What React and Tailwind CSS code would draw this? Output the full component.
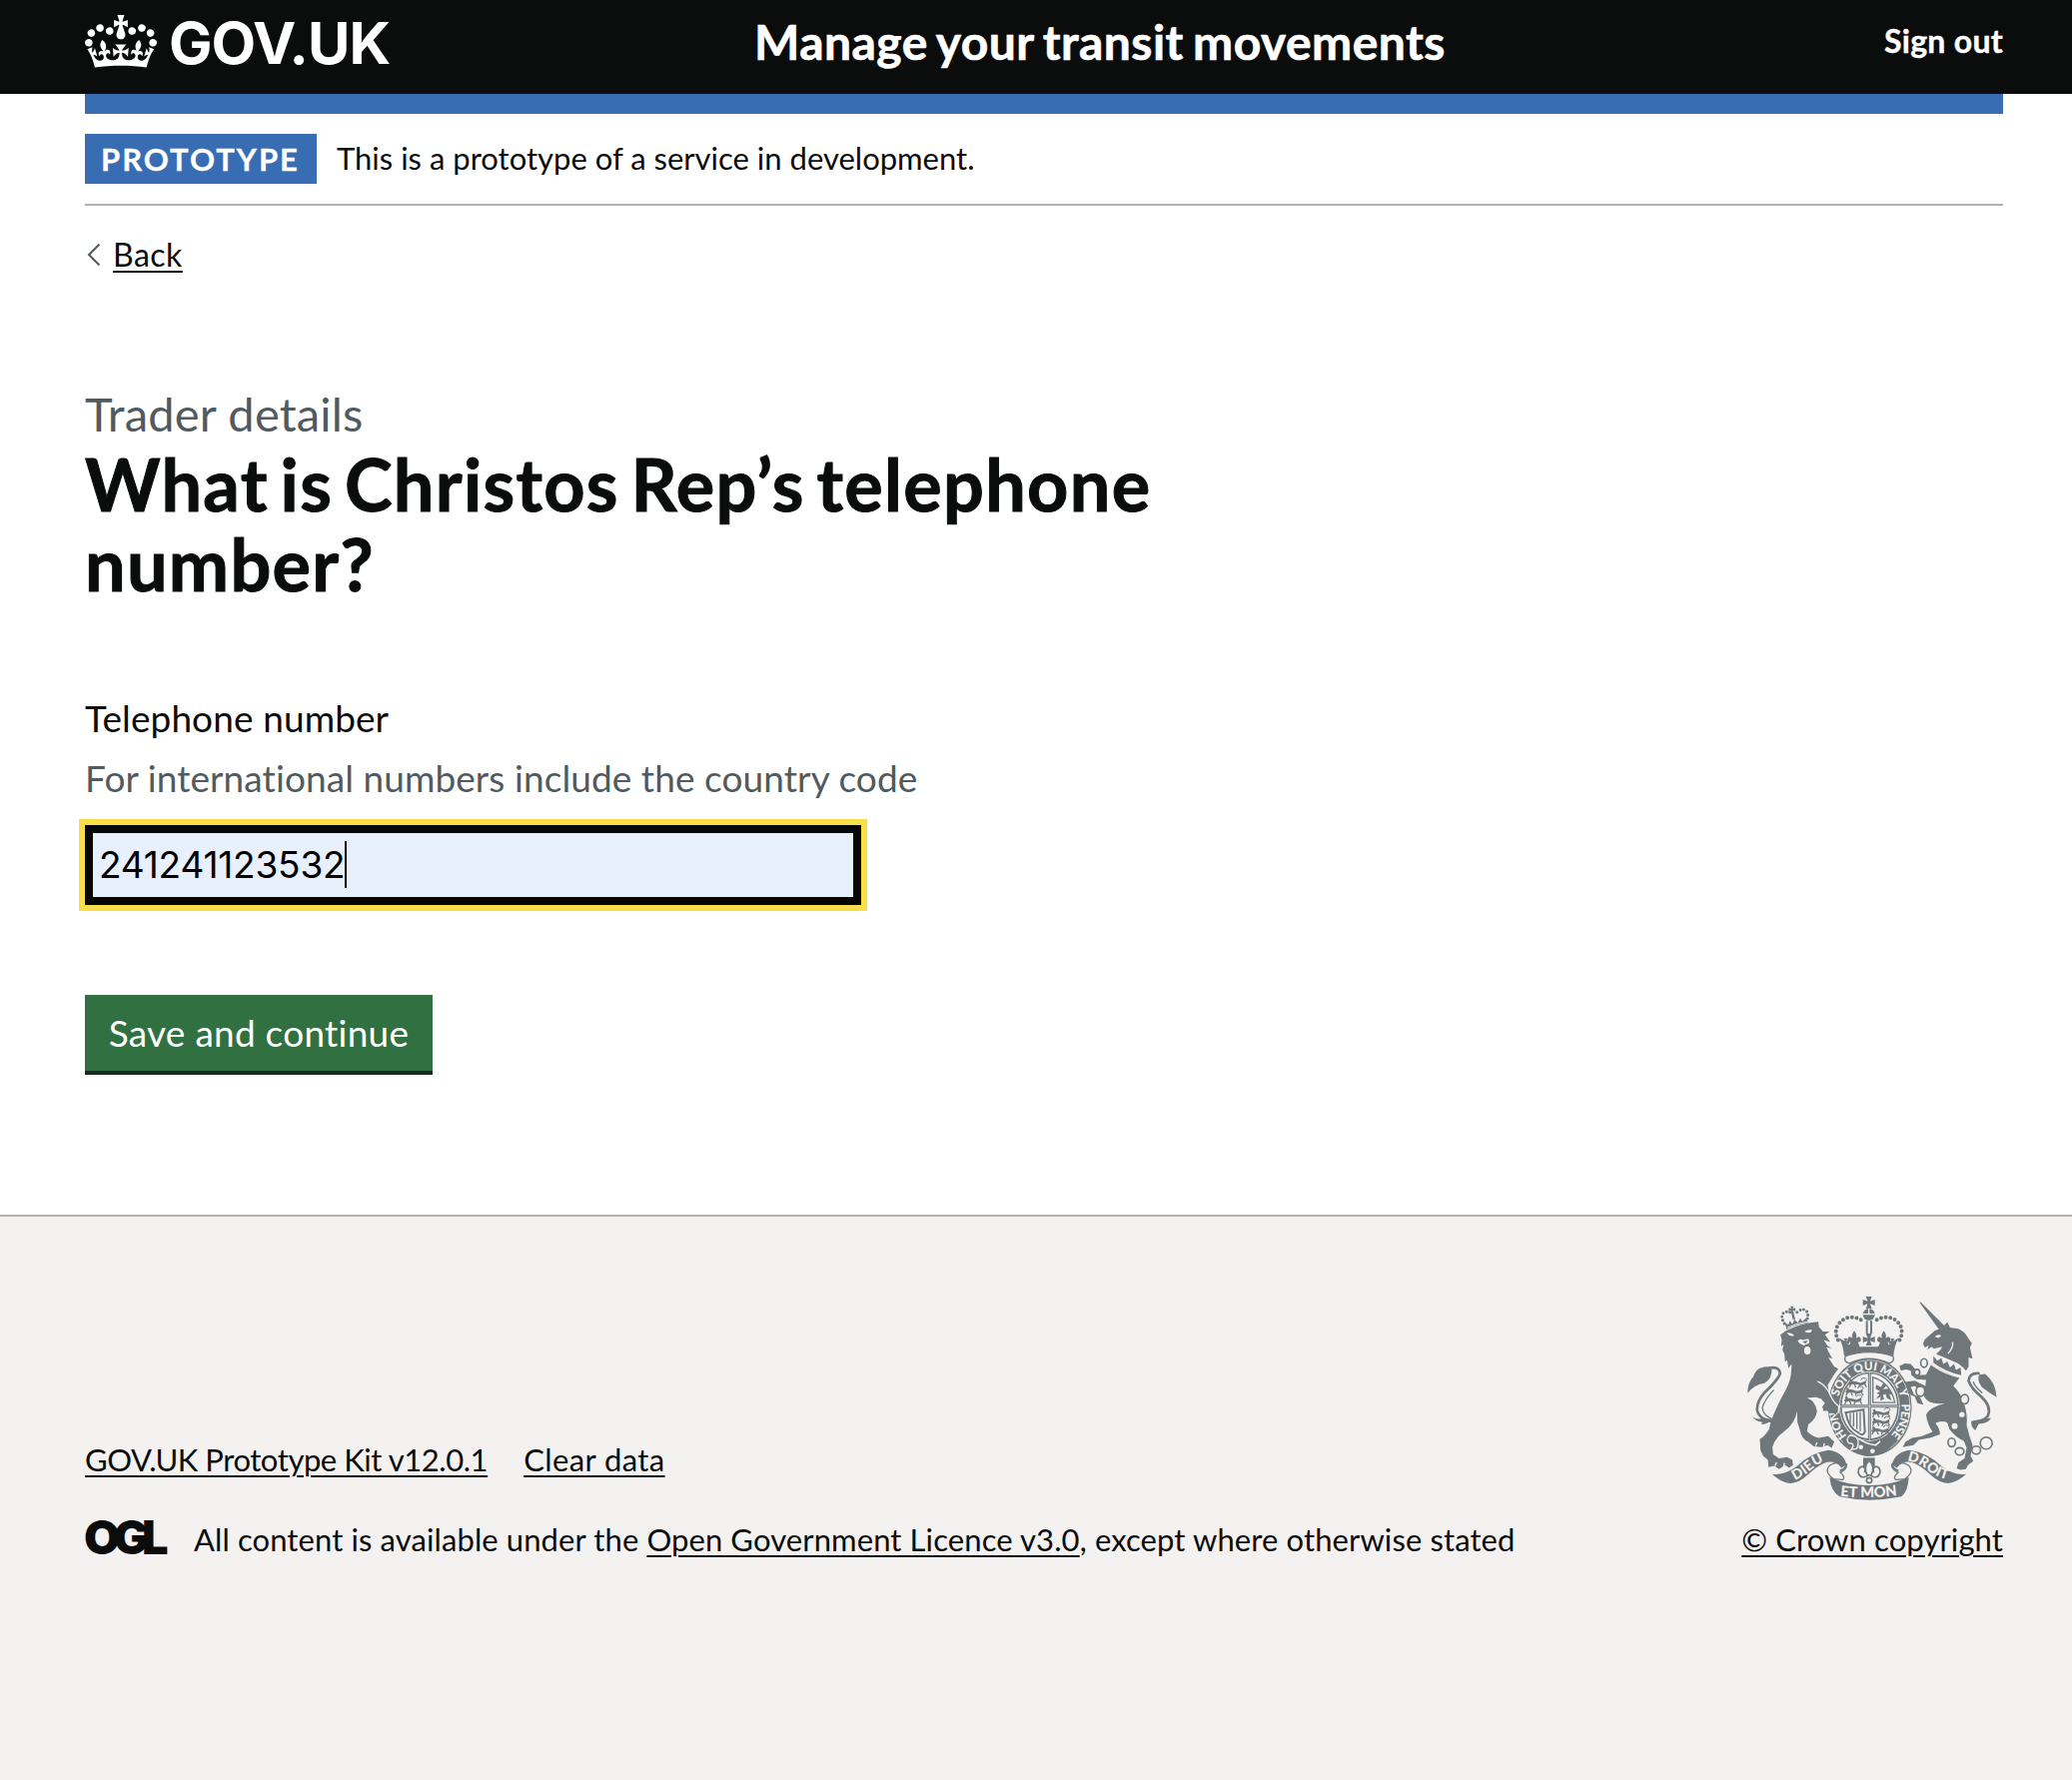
import React from "react";

function Crown() {
  return (
    <svg viewBox="0 0 132 97" className="h-[53px] w-[72px] shrink-0" fill="currentColor" aria-hidden="true">
      <path
        fillRule="evenodd"
        d="M25 30.2c3.5 1.5 7.7-.2 9.1-3.7 1.5-3.6-.2-7.8-3.9-9.2-3.6-1.4-7.6.3-9.1 3.9-1.4 3.5.3 7.5 3.9 9zM9 39.5c3.6 1.5 7.8-.2 9.2-3.7 1.5-3.6-.2-7.8-3.9-9.1-3.6-1.5-7.6.2-9.1 3.8-1.4 3.5.3 7.5 3.8 9zM4.4 57.2c3.5 1.5 7.7-.2 9.1-3.8 1.5-3.6-.2-7.7-3.9-9.1-3.5-1.5-7.6.3-9.1 3.8-1.4 3.5.3 7.6 3.9 9.1zm38.3-21.4c3.5 1.5 7.7-.2 9.1-3.8 1.5-3.6-.2-7.7-3.9-9.1-3.6-1.5-7.6.3-9.1 3.8-1.3 3.6.4 7.7 3.9 9.1zm64.4-5.6c-3.6 1.5-7.8-.2-9.1-3.7-1.5-3.6.2-7.8 3.8-9.2 3.6-1.4 7.7.3 9.2 3.9 1.3 3.5-.4 7.5-3.9 9zm15.9 9.3c-3.6 1.5-7.7-.2-9.1-3.7-1.5-3.6.2-7.8 3.7-9.1 3.6-1.5 7.7.2 9.2 3.8 1.5 3.5-.3 7.5-3.8 9zm4.7 17.7c-3.6 1.5-7.8-.2-9.2-3.8-1.5-3.6.2-7.7 3.9-9.1 3.6-1.5 7.7.3 9.2 3.8 1.3 3.5-.4 7.6-3.9 9.1zM89.3 35.8c-3.6 1.5-7.8-.2-9.2-3.8-1.4-3.6.2-7.7 3.9-9.1 3.6-1.5 7.7.3 9.2 3.8 1.4 3.6-.3 7.7-3.9 9.1zM69.7 17.7l8.9 4.7V9.3l-8.9 2.8c-.2-.3-.5-.6-.9-.9L72.4 0H59.6l3.5 11.2c-.3.3-.6.5-.9.9l-8.8-2.8v13.1l8.8-4.7c.3.3.6.7.9.9l-5 15.4v.1c-.2.8-.4 1.6-.4 2.4 0 4.1 3.1 7.5 7 8.1h.2c.3 0 .7.1 1 .1.4 0 .7 0 1-.1h.2c4-.6 7.1-4.1 7.1-8.1 0-.8-.1-1.7-.4-2.4V34l-5.1-15.4c.4-.2.7-.6 1-.9zM66 92.8c16.9 0 32.8 1.1 47.1 3.2 4-16.9 8.9-26.7 14-33.5l-9.6-3.4c1 4.9 1.1 7.2 0 10.2-1.5-1.4-3-4.3-4.2-8.7L108.6 76c2.8-2 5-3.2 7.5-3.3-4.4 9.4-10 11.9-13.6 11.2-4.3-.8-6.3-4.6-5.6-7.9 1-4.7 5.7-5.9 8-.5 4.3-8.7-3-11.4-7.6-8.8 7.1-7.2 7.9-13.5 2.1-21.1-8 6.1-8.1 12.3-4.5 20.8-4.7-5.4-12.1-2.5-9.5 6.2 3.4-5.2 7.9-2 7.2 3.1-.6 4.3-6.4 7.8-13.5 7.2-10.3-.9-10.9-8-11.2-13.8 2.5-.5 7.1 1.8 11 7.3L80.2 60c-4.1 4.4-8 5.3-12.3 5.4 1.4-4.4 8-11.6 8-11.6H55.5s6.4 7.2 7.9 11.6c-4.2-.1-8-1-12.3-5.4l1.4 16.4c3.9-5.5 8.5-7.7 10.9-7.3-.3 5.8-.9 12.8-11.1 13.8-7.2.6-12.9-2.9-13.5-7.2-.7-5 3.8-8.3 7.1-3.1 2.7-8.7-4.6-11.6-9.4-6.2 3.7-8.5 3.6-14.7-4.6-20.8-5.8 7.6-5 13.9 2.2 21.1-4.7-2.6-11.9.1-7.7 8.8 2.3-5.5 7.1-4.2 8.1.5.7 3.3-1.3 7.1-5.7 7.9-3.5.7-9-1.8-13.5-11.2 2.5.1 4.7 1.3 7.5 3.3l-4.7-15.4c-1.2 4.4-2.7 7.2-4.3 8.7-1.1-3-.9-5.3 0-10.2l-9.5 3.4c5 6.9 9.9 16.7 14 33.5 14.8-2.1 30.8-3.2 47.7-3.2z"
      />
    </svg>
  );
}

const GREY = "#6f777b";
const PAPER = "#f3f2f1";

function Cross({ x, y, r }) {
  return (
    <path
      transform={`translate(${x} ${y}) scale(${r / 10})`}
      d="M-5-10H5L2-2 10-5V5L2 2 5 10H-5L-2 2-10 5V-5L-2-2Z"
      fill={GREY}
    />
  );
}

function Fleur({ x, y, s = 1 }) {
  return (
    <path
      transform={`translate(${x} ${y}) scale(${s})`}
      d="M0-24Q9-13 5-3 14-12 18-2 20 7 10 8L16 22H-16L-10 8Q-20 7-18-2-14-12-5-3-9-13 0-24Z"
      fill={GREY}
    />
  );
}

// Small striding lion used in the shield quarters.
function ShieldLion({ x, y }) {
  return (
    <g transform={`translate(${x} ${y})`} fill="none" stroke={GREY} strokeWidth="5" strokeLinecap="round">
      <path d="M2 3Q12-3 24 2T46 0" strokeWidth="8" />
      <path d="M4 4L0 13M14 3L18 13M32 4L28 13M44 2L50 12" strokeWidth="4" />
      <path d="M46-2Q56-8 48-13T34-9" strokeWidth="3" />
      <path d="M4-6L8 2" strokeWidth="8" />
    </g>
  );
}

function Crest({ className }) {
  return (
    <svg viewBox="57 53 750 613" className={className} role="img" aria-label="Royal coat of arms">
      {/* Imperial crown */}
      <Cross x={422} y={71} r={18} />
      <ellipse cx="422" cy="107" rx="18" ry="18" fill={GREY} />
      <path d="M404 106H440M422 88V106" stroke={PAPER} strokeWidth="4" />
      <path d="M416 126V164M429 126V164" stroke={GREY} strokeWidth="6" />
      <g fill="none" stroke={GREY} strokeWidth="12" strokeLinecap="round" strokeDasharray="0 14">
        <path d="M398 123Q372 108 346 122Q322 138 323 162Q324 178 334 190" />
        <path d="M446 123Q474 108 500 122Q522 138 521 162Q520 178 510 190" />
      </g>
      <path d="M334 178L352 190L370 204H474L492 190L511 178Q498 204 496 232Q422 210 348 232Q346 204 334 178Z" fill={GREY} />
      <Cross x={422} y={182} r={18} />
      <Cross x={352} y={190} r={11} />
      <Cross x={493} y={190} r={11} />
      <Fleur x={378} y={182} s={1.1} />
      <Fleur x={467} y={182} s={1.1} />

      {/* Garter */}
      <ellipse cx="425" cy="386" rx="126" ry="147" fill={GREY} />
      <ellipse cx="425" cy="386" rx="121" ry="142" fill="none" stroke={PAPER} strokeWidth="2" />
      <path d="M352 232Q422 208 494 232Q502 246 484 254Q422 226 364 254Q344 250 352 232Z" fill={PAPER} stroke={GREY} strokeWidth="4" />
      <ellipse cx="424" cy="383" rx="91" ry="105" fill={PAPER} />
      <path id="motto-left" d="M356 472A97 112 0 0 1 327 396" fill="none" />
      <path id="motto-top" d="M331 354A97 112 0 0 1 520 372" fill="none" />
      <path id="motto-right" d="M520 376A97 112 0 0 1 482 476" fill="none" />
      <g fill={PAPER} fontFamily="Lato, sans-serif" fontWeight="900" fontSize="35">
        <text textLength="80"><textPath href="#motto-left">HON</textPath></text>
        <text textLength="266"><textPath href="#motto-top">SOIT QUI MAL Y</textPath></text>
        <text textLength="102"><textPath href="#motto-right">PENSE</textPath></text>
      </g>

      {/* Shield */}
      <ellipse cx="424" cy="383" rx="86" ry="100" fill="none" stroke={GREY} strokeWidth="5" />
      <path d="M424 282V486M336 383H512" stroke={GREY} strokeWidth="9" />
      <path d="M424 282V486M336 383H512" stroke={PAPER} strokeWidth="2" />
      <ShieldLion x={364} y={312} />
      <ShieldLion x={354} y={337} />
      <ShieldLion x={350} y={363} />
      <ShieldLion x={434} y={402} />
      <ShieldLion x={434} y={428} />
      <ShieldLion x={432} y={454} />
      <path d="M434 296Q488 312 500 372H434Z" fill="none" stroke={GREY} strokeWidth="4" />
      <path
        d="M442 362L454 348L446 344L456 338L442 330L444 318L458 326L466 312L474 322L464 332L482 330L494 350L484 346L490 366L476 358L472 346L464 350L468 362L456 366L458 354Z"
        fill={GREY}
      />
      <path d="M352 402L406 393L410 460Q404 476 390 462Q362 450 352 402Z" fill="none" stroke={GREY} strokeWidth="6" />
      <path d="M366 404V434M376 402V444M386 401V452M396 400V458" stroke={GREY} strokeWidth="4" />

      {/* Garter buckle */}
      <path d="M350 472Q368 500 400 504L440 488L484 482L494 500Q460 540 408 532Q366 520 344 492Z" fill={GREY} />
      <path d="M366 470Q350 482 362 494Q384 494 368 514L386 510Q396 488 382 474Z" fill={GREY} stroke={PAPER} strokeWidth="4" />
      <path d="M390 480Q414 496 442 500L456 488" fill="none" stroke={PAPER} strokeWidth="5" />
      <circle cx="398" cy="506" r="7" fill={PAPER} />
      <circle cx="433" cy="518" r="7" fill={PAPER} />

      {/* Lion's tail */}
      <g fill="none" stroke={GREY} strokeLinecap="round">
        <path d="M140 430Q92 425 86 395Q84 370 108 342Q148 305 155 285Q153 262 122 268" strokeWidth="8" />
        <path d="M140 425Q102 412 102 388Q106 366 135 335" strokeWidth="4" />
      </g>
      <path d="M57 344Q58 310 74 295Q84 268 100 267Q113 260 130 268Q132 300 108 314Q78 318 57 344Z" fill={GREY} />
      <path d="M72 414Q88 426 104 418L130 422Q118 438 98 438Q104 432 98 430Q82 428 72 414Z" fill={GREY} />

      {/* Lion */}
      <path
        d="M156 168L174 155Q220 132 270 129L272 145L284 158L304 158L290 168L306 190L286 184L298 202L310 208L294 206L312 240L300 236L318 264L330 270L316 290L298 320L303 345L318 368L330 378L328 400L322 408L312 402L304 404L296 396L286 398L282 384L290 374L278 360L262 356L236 358Q262 368 266 398Q262 424 240 438L236 458Q250 474 270 478L300 473L318 490L310 508L298 500L280 506L256 504L240 490Q220 484 215 456L207 430L206 398Q200 436 164 462Q140 478 132 505L134 528L152 540L176 536L192 544L194 560L182 568L170 560L152 572L138 562L120 566L118 544L104 532L96 516L94 482L106 474Q116 462 122 452Q128 418 160 356Q186 312 188 285L190 256L180 268L176 244L170 250L168 226L162 214L166 196L158 204L160 182Z"
        fill={GREY}
      />
      <path d="M175 162Q190 160 198 170Q184 176 175 162ZM228 158Q240 150 252 154Q246 168 228 158Z" fill={PAPER} />
      <path d="M208 186Q216 178 224 184L240 180Q244 186 243 193L226 200Q212 196 208 186Z" fill={PAPER} />
      <ellipse cx="237" cy="215" rx="10" ry="12" fill={PAPER} />
      <path d="M222 188L238 185L232 195Z" fill={GREY} />
      <path d="M268 308Q296 322 306 350Q316 372 332 384L330 404" fill="none" stroke={PAPER} strokeWidth="4" />
      <path d="M118 560L114 548M140 562L144 552M166 564L168 554M262 502L266 492M286 505L288 494" stroke={PAPER} strokeWidth="4" />

      {/* Lion's crown */}
      <path d="M174 152L170 132L180 138L184 126L192 136L198 122L208 132L216 118L222 128L232 118L240 132Q204 136 174 152Z" fill={GREY} />
      <path d="M168 134Q154 112 166 102Q178 94 192 104M206 100Q222 86 234 96Q242 106 236 122" fill="none" stroke={GREY} strokeWidth="9" strokeLinecap="round" strokeDasharray="0 11" />
      <Cross x={191} y={92} r={10} />
      <path d="M192 100L197 122" stroke={GREY} strokeWidth="7" />
      <path d="M176 147Q206 132 238 129" fill="none" stroke={PAPER} strokeWidth="3" />

      {/* Unicorn's tail */}
      <g fill="none" stroke={GREY} strokeLinecap="round">
        <path d="M752 284Q724 282 722 306Q728 328 760 354Q792 384 780 412Q768 428 738 430" strokeWidth="8" />
        <path d="M736 310Q742 326 762 342" strokeWidth="4" />
      </g>
      <path d="M806 356Q782 342 762 326Q746 304 754 288L772 286Q804 312 806 356Z" fill={GREY} />
      <path d="M730 428L762 422L790 418Q780 436 752 436L742 456Q728 444 730 428Z" fill={GREY} />

      {/* Unicorn */}
      <path d="M573 69L580 72L650 142L634 154Z" fill={GREY} />
      <path
        d="M585 195L590 182L620 156L642 148L658 130L666 146L690 150Q710 158 718 174L732 194L726 206L734 240L722 236L722 264L714 276Q700 256 672 246L624 226Q640 214 642 204L618 210L610 204L598 214L602 200L590 206Z"
        fill={GREY}
      />
      <path d="M620 174Q630 164 640 170L632 178Z" fill={PAPER} />
      <path d="M674 190Q676 208 660 224" fill="none" stroke={PAPER} strokeWidth="4" />
      <path
        d="M610 256Q640 280 696 296L676 322Q696 340 708 372Q720 412 716 440L724 470L734 500L728 532L736 548L720 560L714 572L698 574L686 570L692 552L710 540L716 508L708 488Q682 476 664 452L658 432Q640 424 622 434Q636 450 636 468L606 478L572 484L556 500L524 506L532 490L552 478L580 474L614 460Q598 438 594 408Q606 386 652 374Q624 378 604 370Q586 358 582 336L558 322L548 326L558 348L576 356L586 378L568 374L560 354L542 346L530 310L560 306L592 322L594 304L566 302L550 290L548 276L534 272L518 276L514 262L530 254L548 256L562 272L570 290L594 288Z"
        fill={GREY}
      />
      <path d="M614 240Q656 272 706 288" fill="none" stroke={PAPER} strokeWidth="22" />
      <path d="M616 252L616 232L628 246L640 238L646 256L658 248L666 266L678 256L684 274L698 266L700 290Q650 278 616 252Z" fill={GREY} />
      <path d="M610 258Q656 290 704 298" fill="none" stroke={PAPER} strokeWidth="4" />

      {/* Chain */}
      <g fill="none" stroke={GREY} strokeWidth="5">
        <ellipse cx="588" cy="253" rx="10" ry="13" />
        <ellipse cx="567" cy="281" rx="8" ry="9" fill={PAPER} />
        <ellipse cx="577" cy="338" rx="13" ry="15" fill={PAPER} />
        <ellipse cx="710" cy="362" rx="12" ry="14" fill={PAPER} />
        <ellipse cx="671" cy="492" rx="11" ry="13" />
        <ellipse cx="695" cy="519" rx="13" ry="11" fill={PAPER} />
        <ellipse cx="745" cy="515" rx="13" ry="12" />
        <circle cx="775" cy="494" r="18" />
      </g>
      <circle cx="702" cy="408" r="8" fill={PAPER} />
      <circle cx="680" cy="443" r="9" fill={PAPER} />

      {/* Ribbon */}
      {["", "translate(846 0) scale(-1 1)"].map((t) => (
        <g key={t} transform={t || undefined}>
          <path d="M131 587Q168 592 205 564Q248 522 300 515Q344 520 355 558L340 568Q318 542 288 554Q262 566 240 588Q212 614 186 615Q158 612 131 587Z" fill={GREY} />
          <path d="M355 558Q356 574 336 582Q352 596 344 604L316 602Q296 588 297 574Q300 556 328 553" fill="none" stroke={GREY} strokeWidth="4" />
          <path d="M335 577Q352 572 355 556" fill="none" stroke={GREY} strokeWidth="6" />
        </g>
      ))}
      <path d="M304 597Q362 622 423 621Q484 622 542 597Q540 638 520 655Q423 675 334 655Q308 640 304 597Z" fill={GREY} />
      <path id="ribbon-left" d="M200 605Q232 590 262 562Q280 550 306 545" fill="none" />
      <path id="ribbon-mid" d="M336 653Q423 663 520 649" fill="none" />
      <path id="ribbon-right" d="M537 547Q572 552 602 578Q630 600 676 606" fill="none" />
      <g fill={PAPER} fontFamily="Lato, sans-serif" fontWeight="900" fontSize="42">
        <text textLength="104"><textPath href="#ribbon-left">DIEU</textPath></text>
        <text fontSize="44" textLength="172"><textPath href="#ribbon-mid">ET MON</textPath></text>
        <text textLength="134"><textPath href="#ribbon-right">DROIT</textPath></text>
      </g>

      {/* Pendant fleur */}
      <path d="M405 538H440V566H405Z" fill={GREY} />
      <g fill={PAPER} stroke={GREY} strokeWidth="5">
        <path d="M418 592Q396 604 390 582Q390 566 402 564Q414 568 410 580Q422 582 418 592Z" />
        <path d="M428 592Q450 604 456 582Q456 566 444 564Q432 568 436 580Q424 582 428 592Z" />
        <path d="M423 546Q442 564 429 590H417Q404 564 423 546Z" />
        <circle cx="423" cy="606" r="8" />
      </g>
    </svg>
  );
}

const link = "underline decoration-2 underline-offset-[4px]";

export default function App() {
  return (
    <div className="flex min-h-[1782px] w-full flex-col bg-white font-['Lato',sans-serif] text-[#0b0c0c] [font-variant-ligatures:none]">
      <header className="flex h-[94px] items-start bg-[#0b0c0c] pl-[85px] pr-[69px] font-bold text-white">
        <a className="flex w-[672px] items-start pt-[15px]">
          <Crown />
          <span className="-mt-[2px] ml-[12px] font-['Inter',sans-serif] text-[58px] font-bold leading-[60px] tracking-[-1px]">
            GOV.UK
          </span>
        </a>
        <div className="-ml-[2px] pt-[12px] text-[48px] leading-[60px] tracking-[0.45px] [-webkit-text-stroke:0.6px_white] [word-spacing:-3px]">
          Manage your transit movements
        </div>
        <a className="ml-auto pt-[21px] text-[32px] leading-[40px] tracking-[0.3px] [-webkit-text-stroke:0.4px_white]">
          Sign out
        </a>
      </header>

      <div className="ml-[85px] mr-[69px] h-[20px] bg-[#386db4]" />

      <div className="pl-[85px] pr-[69px]">
        <div className="flex items-center gap-[20px] border-b-2 border-[#b1b4b6] py-[20px]">
          <strong className="h-[50px] w-[232px] bg-[#386db4] pl-[16px] text-[31px] font-bold leading-[51px] tracking-[2px] text-white [-webkit-text-stroke:0.3px_white]">
            PROTOTYPE
          </strong>
          <span className="-mt-[2px] text-[31px] leading-[46px]">This is a prototype of a service in development.</span>
        </div>

        <div className="mt-[24px] flex h-[50px] items-center">
          <svg viewBox="0 0 14 24" className="ml-[2px] h-[24px] w-[14px]" fill="none" stroke="#505a5f" strokeWidth="2">
            <path d="M12.5 1.5L2 12L12.5 22.5" />
          </svg>
          <a className={`ml-[12px] text-[32px] leading-[48px] tracking-[0.5px] ${link}`}>Back</a>
        </div>

        <main className="mt-[104px] pb-[140px]">
          <span className="block text-[47px] leading-[60px] tracking-[0.2px] text-[#505a5f]">Trader details</span>
          <h1 className="w-[1200px] text-[72px] font-bold leading-[80px] tracking-[1.3px] [-webkit-text-stroke:1px_#0b0c0c] [word-spacing:-7px]">
            What is Christos Rep’s telephone
            <br />
            number?
          </h1>

          <form className="mt-[90px]">
            <label className="block text-[37px] leading-[50px] tracking-[0.1px]">Telephone number</label>
            <div className="mt-[10px] text-[37px] leading-[50px] tracking-[0.08px] text-[#505a5f]">
              For international numbers include the country code
            </div>
            <div className="mt-[22px] flex h-[80px] w-[777px] items-center border-8 border-[#050606] bg-[#e8effd] pl-[6px] outline-[6px] outline-[#f8de49]">
              <span className="-mt-px font-['Inter',sans-serif] text-[37px] leading-[48px] tracking-[-0.2px] text-black">
                241241123532
              </span>
              <span className="-mt-px h-[47px] w-[2px] bg-black" />
            </div>
            <button
              type="button"
              className="mt-[90px] block h-[80px] w-[348px] border-b-4 border-[#122f1e] bg-[#307041] text-[37px] leading-[76px] tracking-[0.25px] text-white"
            >
              Save and continue
            </button>
          </form>
        </main>
      </div>

      <footer className="flex grow items-start justify-between border-t-2 border-[#b1b4b6] bg-[#f3f2f1] pl-[85px] pr-[69px] text-[31px] leading-[40px]">
        <div className="pt-[223px]">
          <div className="flex gap-[36px]">
            <a className={`tracking-[-0.45px] ${link}`}>GOV.UK Prototype Kit v12.0.1</a>
            <a className={`tracking-[0.4px] ${link}`}>Clear data</a>
          </div>
          <div className="mt-[40px] flex">
            <span className="-ml-px w-[110px] -translate-y-[2px] font-['Inter',sans-serif] text-[47px] font-black leading-[40px] tracking-[-7px]">
              OGL
            </span>
            <span className="tracking-[0.1px]">
              All content is available under the <a className={link}>Open Government Licence v3.0</a>, except where
              otherwise stated
            </span>
          </div>
        </div>
        <div className="flex flex-col items-center pt-[80px]">
          <Crest className="h-[204px] w-[250px]" />
          <a className={`mt-[19px] tracking-[0.1px] ${link}`}>© Crown copyright</a>
        </div>
      </footer>
    </div>
  );
}
